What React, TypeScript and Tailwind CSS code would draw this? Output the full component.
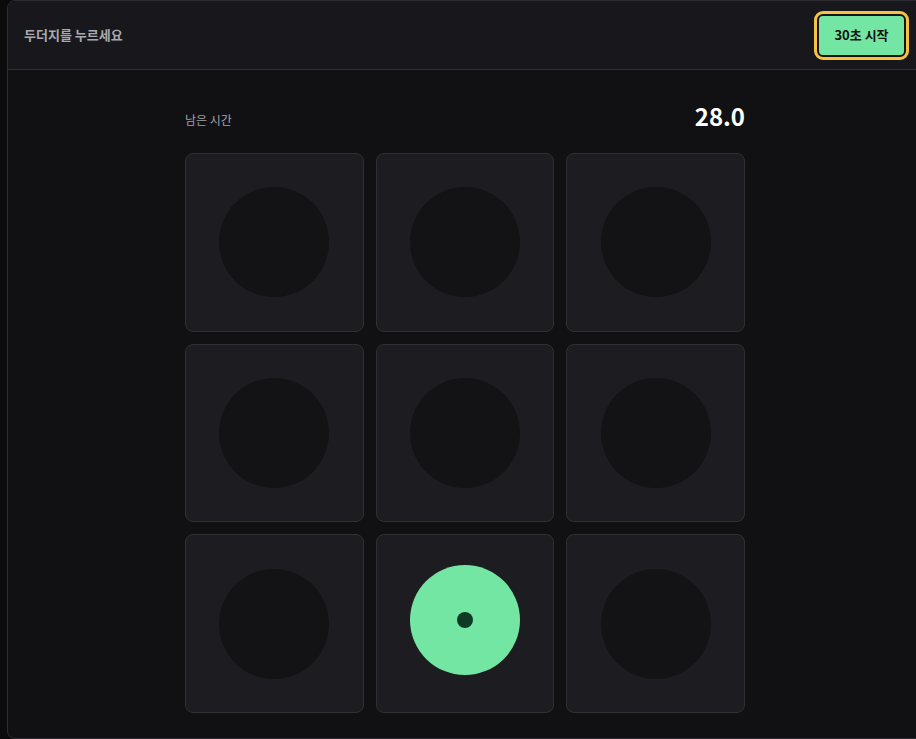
import { useState } from "react";

const FONT = { fontFamily: '"Noto Sans CJK KR", "Noto Sans", sans-serif' };

function Hole({ up }: { up: boolean }) {
  return (
    <div className="aspect-square rounded-lg border border-[#2f2f35] bg-[#1d1d21] flex items-center justify-center">
      {up ? (
        <div className="w-[110px] h-[110px] -translate-y-1 rounded-full bg-[#74e6a3] flex items-center justify-center">
          <div className="w-4 h-4 rounded-full bg-[#0f3a24]" />
        </div>
      ) : (
        <div className="w-[110px] h-[110px] rounded-full bg-[#131316]" />
      )}
    </div>
  );
}

export default function App() {
  const [active] = useState(7);
  const holes = Array.from({ length: 9 }, (_, i) => i);

  return (
    <div className="min-h-screen bg-[#0b0b0d] overflow-hidden" style={FONT}>
      <div className="ml-[7px] w-[916px] h-[739px] rounded-lg border border-[#2c2c31] bg-[#111114] overflow-hidden">
        <div className="h-[69px] px-4 flex items-center justify-between bg-[#18181c] border-b border-[#2e2e33]">
          <span className="text-[13px] font-bold text-[#a9a9b0]">두더지를 누르세요</span>
          <button className="w-[89px] h-[43px] rounded-md border-2 border-[#141414] bg-[#74e6a3] text-[13px] font-bold text-[#111] outline-[3px] outline-solid outline-[#f5c244]">
            30초 시작
          </button>
        </div>

        <div className="w-[560px] mx-auto pt-8">
          <div className="h-8 flex items-center justify-between mb-[19px]">
            <span className="text-xs text-[#a1a1aa] mt-1">남은 시간</span>
            <span className="text-2xl font-bold text-white -mt-1">28.0</span>
          </div>
          <div className="grid grid-cols-3 gap-3">
            {holes.map((i) => (
              <Hole key={i} up={i === active} />
            ))}
          </div>
        </div>
      </div>
    </div>
  );
}
